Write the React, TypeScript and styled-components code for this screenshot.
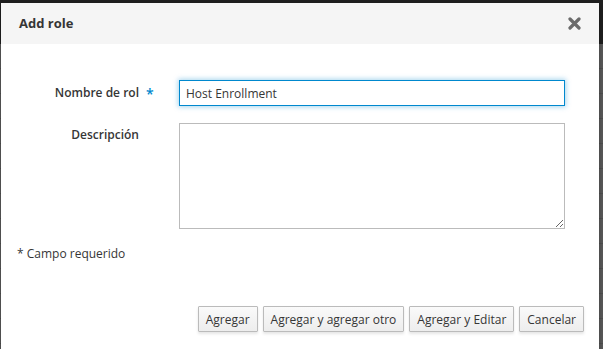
import React from "react";
import styled, { createGlobalStyle } from "styled-components";

const Global = createGlobalStyle`
  html, body { margin: 0; padding: 0; }
  body {
    width: 603px;
    height: 349px;
    overflow: hidden;
    font-family: "Open Sans", "Noto Sans", sans-serif;
    background: #5b5b5b;
  }
  * { box-sizing: border-box; }
`;

const Stage = styled.div`
  position: relative;
  width: 603px;
  height: 349px;
  overflow: hidden;
`;

const Backdrop = styled.div`
  display: flex;
  flex-direction: column;
  height: 100%;
`;

const NavBar = styled.div`
  height: 44px;
  background: #1f1f1f;
`;

const PageContent = styled.div`
  flex: 1;
  background: repeating-linear-gradient(
    to bottom,
    #5a5a5a 0px,
    #5a5a5a 24px,
    #4f4f4f 24px,
    #4f4f4f 25px
  );
`;

const Modal = styled.div`
  position: absolute;
  left: 1px;
  top: 3px;
  width: 598px;
  background: #fff;
  box-shadow: 0 2px 6px rgba(0, 0, 0, 0.3);
`;

const Header = styled.div`
  height: 41px;
  background: #f5f5f5;
  border-bottom: 1px solid #f5f5f5;
  display: flex;
  align-items: center;
  justify-content: space-between;
  padding: 0 18px 0 18px;
`;

const Title = styled.h4`
  margin: 0;
  font-size: 13px;
  font-weight: 700;
  color: #363636;
`;

const CloseButton = styled.button`
  border: 0;
  background: transparent;
  padding: 0;
  width: 14px;
  height: 14px;
  display: flex;
  align-items: center;
  justify-content: center;
  cursor: pointer;
`;

const Body = styled.div`
  padding: 36px 35px 0 16px;
`;

const Form = styled.div`
  display: flex;
  flex-direction: column;
  gap: 17px;
`;

const Row = styled.div`
  display: grid;
  grid-template-columns: 122px 386px;
  column-gap: 40px;
  align-items: start;
`;

const Label = styled.label<{ $required?: boolean; $top: number }>`
  position: relative;
  text-align: right;
  font-size: 12px;
  font-weight: 600;
  color: #363636;
  padding-top: ${(p) => p.$top}px;
  line-height: 18px;
  &::after {
    content: ${(p) => (p.$required ? '"*"' : "none")};
    position: absolute;
    left: 129px;
    top: ${(p) => p.$top + 1}px;
    color: #0088ce;
    font-size: 14px;
    font-weight: 600;
  }
`;

const Input = styled.input`
  width: 386px;
  height: 26px;
  border: 1px solid #0088ce;
  box-shadow: 0 0 5px 1px rgba(0, 136, 206, 0.35);
  padding: 2px 6px;
  font-family: inherit;
  font-size: 12px;
  color: #363636;
  outline: none;
`;

const TextArea = styled.textarea`
  width: 386px;
  height: 106px;
  border: 1px solid #bbb;
  padding: 4px 6px;
  font-family: inherit;
  font-size: 12px;
  resize: vertical;
  display: block;
`;

const RequiredNote = styled.div`
  margin-top: 16px;
  font-size: 12px;
  color: #363636;
  line-height: 18px;
`;

const Footer = styled.div`
  display: flex;
  justify-content: flex-end;
  gap: 5px;
  padding: 43px 15px 20px 16px;
`;

const Button = styled.button`
  height: 26px;
  padding: 2px 7px;
  font-family: inherit;
  font-size: 12px;
  color: #363636;
  border: 1px solid #bbb;
  border-radius: 1px;
  background: linear-gradient(to bottom, #fafafa 0%, #ededed 100%);
  box-shadow: 0 2px 3px rgba(3, 3, 3, 0.1);
  cursor: pointer;
`;

const CloseIcon = () => (
  <svg width="13" height="13" viewBox="0 0 13 13">
    <path
      d="M2 2 L11 11 M11 2 L2 11"
      stroke="#6b6b6b"
      strokeWidth="3.2"
      strokeLinecap="round"
    />
  </svg>
);

export default function App() {
  return (
    <Stage>
      <Global />
      <Backdrop>
        <NavBar />
        <PageContent />
      </Backdrop>
      <Modal>
        <Header>
          <Title>Add role</Title>
          <CloseButton aria-label="Close">
            <CloseIcon />
          </CloseButton>
        </Header>
        <Body>
          <Form>
            <Row>
              <Label $required $top={4}>Nombre de rol</Label>
              <Input defaultValue="Host Enrollment" />
            </Row>
            <Row>
              <Label $top={3}>Descripción</Label>
              <TextArea />
            </Row>
          </Form>
          <RequiredNote>* Campo requerido</RequiredNote>
        </Body>
        <Footer>
          <Button>Agregar</Button>
          <Button>Agregar y agregar otro</Button>
          <Button>Agregar y Editar</Button>
          <Button>Cancelar</Button>
        </Footer>
      </Modal>
    </Stage>
  );
}
